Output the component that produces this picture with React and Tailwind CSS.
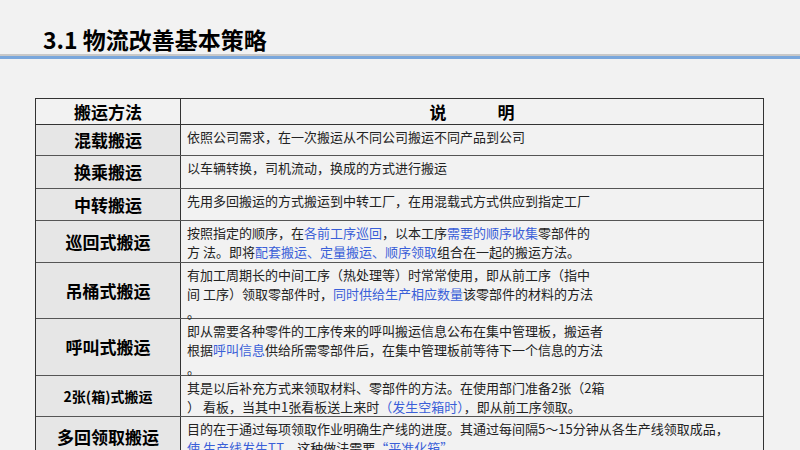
const B = ({ children }) => <span className="text-[#3a5fd8]">{children}</span>;

const rows = [
  { h: 31, label: "混载搬运", lines: [<>依照公司需求，在一次搬运从不同公司搬运不同产品到公司</>] },
  { h: 33, label: "换乘搬运", lines: [<>以车辆转换，司机流动，换成的方式进行搬运</>] },
  { h: 32, label: "中转搬运", lines: [<>先用多回搬运的方式搬运到中转工厂，在用混载式方式供应到指定工厂</>] },
  { h: 42, label: "巡回式搬运", lines: [<>按照指定的顺序，在<B>各前工序巡回</B>，以本工序<B>需要的顺序收集</B>零部件的</>, <>方 法。即将<B>配套搬运、定量搬运、顺序领取</B>组合在一起的搬运方法。</>] },
  { h: 56, label: "吊桶式搬运", lines: [<>有加工周期长的中间工序（热处理等）时常常使用，即从前工序（指中</>, <>间 工序）领取零部件时，<B>同时供给生产相应数量</B>该零部件的材料的方法</>, <>。</>] },
  { h: 57, label: "呼叫式搬运", lines: [<>即从需要各种零件的工序传来的呼叫搬运信息公布在集中管理板，搬运者</>, <>根据<B>呼叫信息</B>供给所需零部件后，在集中管理板前等待下一个信息的方法</>, <>。</>] },
  { h: 41, label: "2张(箱)式搬运", small: true, lines: [<>其是以后补充方式来领取材料、零部件的方法。在使用部门准备2张（2箱</>, <>）  看板，当其中1张看板送上来时<B>（发生空箱时）</B>，即从前工序领取。</>] },
  { h: 40, label: "多回领取搬运", lines: [<>目的在于通过每项领取作业明确生产线的进度。其通过每间隔5～15分钟从各生产线领取成品，</>, <><B>使 生产线发生T.T</B>。这种做法需要<B>“平准化箱”</B>。</>] },
];

export default function App() {
  return (
    <div className="w-[800px] h-[450px] overflow-hidden bg-[#f2f2f2] relative" style={{ fontFamily: '"Microsoft YaHei","Noto Sans CJK SC",sans-serif' }}>
      <div className="h-[54px] flex items-end pl-[43px] pb-[3px]">
        <h1 className="text-[23px] font-bold text-black leading-none">3.1 物流改善基本策略</h1>
      </div>
      <div className="h-[2px] bg-[#c8c8c8]" />
      <div className="h-[3px] bg-[#7aa7dc]" />
      <div className="mt-[39px] ml-[35px] w-[729px] border border-[#333] border-b-0">
        <div className="flex h-[26px] border-b border-[#333]">
          <div className="w-[145px] border-r border-[#333] flex items-center justify-center font-bold text-[17px]">搬运方法</div>
          <div className="flex-1 flex items-center justify-center font-bold text-[17px] tracking-[3em] pl-[3em]">说明</div>
        </div>
        {rows.map((r, i) => (
          <div key={i} className="flex border-b border-[#555]" style={{ height: r.h }}>
            <div className={`w-[145px] border-r border-[#333] bg-[#e6e6e6] flex items-center justify-center font-bold ${r.small ? "text-[14px]" : "text-[17px]"}`}>{r.label}</div>
            <div className="flex-1 px-[6px] pt-[2px] text-[13px] leading-[19px] text-[#222]">
              {r.lines.map((l, j) => <div key={j} className="whitespace-nowrap">{l}</div>)}
            </div>
          </div>
        ))}
      </div>
    </div>
  );
}
